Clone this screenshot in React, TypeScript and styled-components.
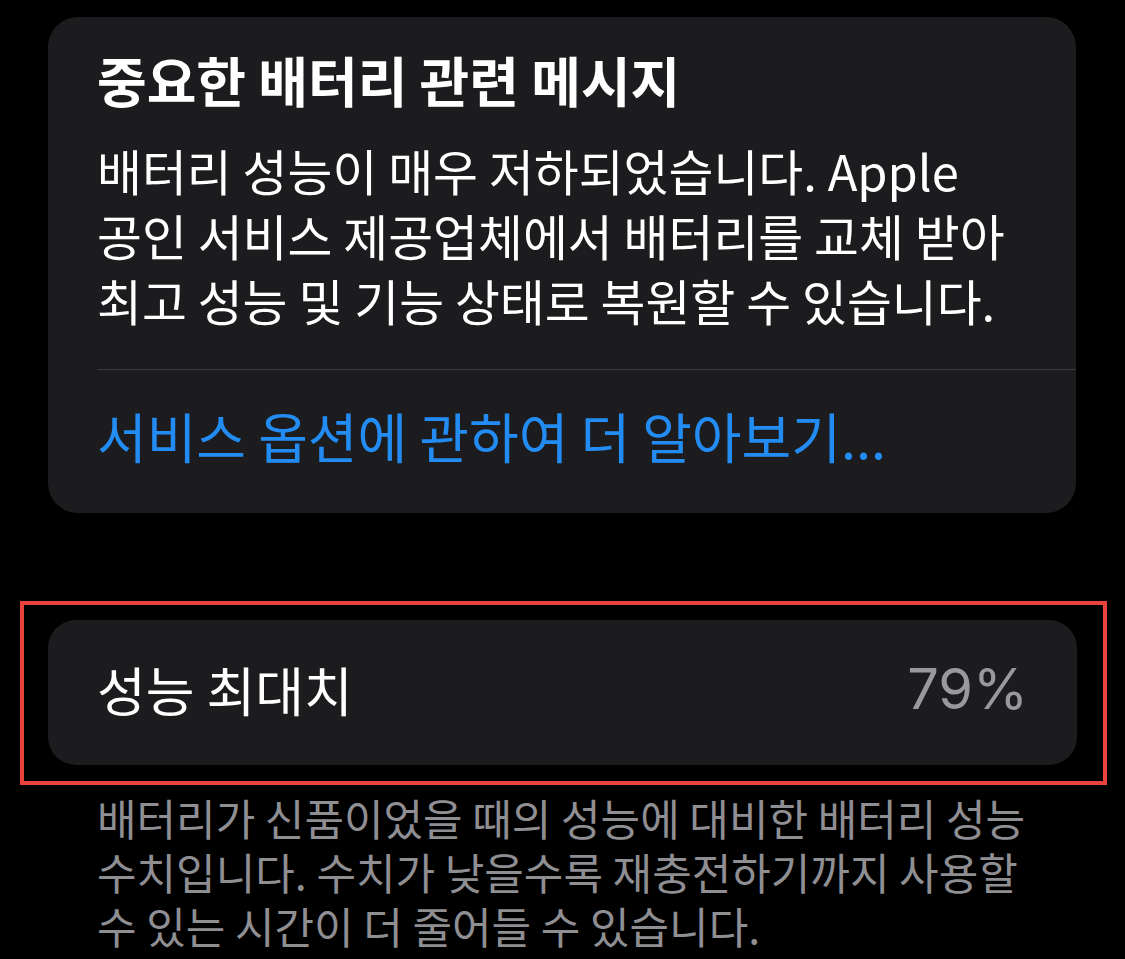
import styled, { createGlobalStyle } from "styled-components";

const GlobalStyle = createGlobalStyle`
  html, body {
    margin: 0;
    padding: 0;
    background: #000;
  }
  body {
    font-family: "Noto Sans CJK KR", "Noto Sans", sans-serif;
    color: #fff;
  }
`;

const App = () => {
  return (
    <Page>
      <GlobalStyle />
      <MessageCard>
        <Title>중요한 배터리 관련 메시지</Title>
        <Body>
          <Line>배터리 성능이 매우 저하되었습니다. Apple</Line>
          <Line>공인 서비스 제공업체에서 배터리를 교체 받아</Line>
          <Line>최고 성능 및 기능 상태로 복원할 수 있습니다.</Line>
        </Body>
        <Divider />
        <LinkText>서비스 옵션에 관하여 더 알아보기...</LinkText>
      </MessageCard>

      <Highlight>
        <ValueCard>
          <Label>성능 최대치</Label>
          <Value>79%</Value>
        </ValueCard>
      </Highlight>

      <Footnote>
        <Line>배터리가 신품이었을 때의 성능에 대비한 배터리 성능</Line>
        <Line>수치입니다. 수치가 낮을수록 재충전하기까지 사용할</Line>
        <Line>수 있는 시간이 더 줄어들 수 있습니다.</Line>
      </Footnote>
    </Page>
  );
};

export default App;

const Page = styled.div`
  width: 1125px;
  height: 959px;
  overflow: hidden;
  padding-top: 17px;
  box-sizing: border-box;
`;

const MessageCard = styled.div`
  margin-left: 48px;
  width: 1028px;
  box-sizing: border-box;
  background: #1c1c1e;
  border-radius: 30px;
  padding: 31px 0 45px 49px;
`;

const Title = styled.div`
  font-size: 54px;
  line-height: 64px;
  font-weight: 700;
  white-space: nowrap;
`;

const Body = styled.div`
  margin-top: 25px;
  font-size: 48.8px;
  line-height: 65px;
  white-space: nowrap;
`;

const Line = styled.div``;

const Divider = styled.div`
  margin-top: 37px;
  height: 1px;
  background: #3a3a3c;
`;

const LinkText = styled.div`
  margin-top: 34px;
  font-size: 54px;
  line-height: 64px;
  color: #238cf3;
  white-space: nowrap;
`;

const Highlight = styled.div`
  margin-top: 88px;
  margin-left: 20px;
  width: 1087px;
  box-sizing: border-box;
  border: 4px solid #e8433a;
  padding: 15px 26px 16px 24px;
`;

const ValueCard = styled.div`
  height: 145px;
  box-sizing: border-box;
  background: #1c1c1e;
  border-radius: 28px;
  display: flex;
  align-items: center;
  justify-content: space-between;
  padding: 0 49px 8px;
`;

const Label = styled.div`
  font-size: 53px;
  white-space: nowrap;
`;

const Value = styled.div`
  font-family: Inter, "Liberation Sans", sans-serif;
  font-size: 56px;
  color: #98989f;
`;

const Footnote = styled.div`
  margin-top: 5px;
  padding-left: 97px;
  font-size: 43px;
  line-height: 54px;
  color: #8e8e93;
  white-space: nowrap;
`;
